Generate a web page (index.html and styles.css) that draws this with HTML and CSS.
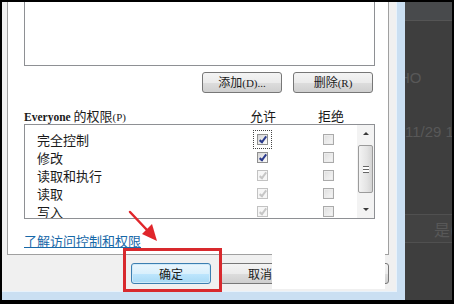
FILE: index.html
```html
<!DOCTYPE html>
<html lang="zh-CN">
<head>
    <meta charset="UTF-8">
    <meta name="viewport" content="width=device-width, initial-scale=1.0">
    <title>Everyone 的权限</title>
    <link rel="stylesheet" href="styles.css">
</head>
<body>
    <div class="screen">
        <div class="dialog">
            <div class="panel">
                <div class="group-list"></div>

                <div class="actions">
                    <button class="btn">添加<span class="lat">(D)...</span></button>
                    <button class="btn">删除<span class="lat">(R)</span></button>
                </div>

                <div class="perm-head">
                    <span class="perm-name"><span class="lat big">Everyone</span> 的权限<span class="lat">(P)</span></span>
                    <span class="perm-col">允许</span>
                    <span class="perm-col deny">拒绝</span>
                </div>

                <div class="perm-list">
                    <div class="perm-rows">
                        <div class="perm-row">
                            <span class="perm-name">完全控制</span>
                            <span class="perm-col"><span class="cb on focus"></span></span>
                            <span class="perm-col deny"><span class="cb off"></span></span>
                        </div>
                        <div class="perm-row">
                            <span class="perm-name">修改</span>
                            <span class="perm-col"><span class="cb on"></span></span>
                            <span class="perm-col deny"><span class="cb off"></span></span>
                        </div>
                        <div class="perm-row">
                            <span class="perm-name">读取和执行</span>
                            <span class="perm-col"><span class="cb on dim"></span></span>
                            <span class="perm-col deny"><span class="cb off"></span></span>
                        </div>
                        <div class="perm-row">
                            <span class="perm-name">读取</span>
                            <span class="perm-col"><span class="cb on dim"></span></span>
                            <span class="perm-col deny"><span class="cb off"></span></span>
                        </div>
                        <div class="perm-row">
                            <span class="perm-name">写入</span>
                            <span class="perm-col"><span class="cb on dim"></span></span>
                            <span class="perm-col deny"><span class="cb off"></span></span>
                        </div>
                    </div>
                    <div class="scrollbar">
                        <div class="sb-btn"><span class="arrow up"></span></div>
                        <div class="sb-track">
                            <div class="sb-thumb"><span class="grip"></span></div>
                        </div>
                        <div class="sb-btn"><span class="arrow down"></span></div>
                    </div>
                </div>

                <a class="help-link" href="#">了解访问控制和权限</a>
            </div>

            <div class="footer">
                <button class="btn default">确定</button>
                <button class="btn">取消</button>
                <button class="btn">应用<span class="lat">(A)</span></button>
            </div>
        </div>

        <div class="backdrop">
            <div class="bd-top"></div>
            <div class="bd-text bd-ho">HO</div>
            <div class="bd-text bd-date">11/29 1</div>
            <div class="bd-band"><span class="bd-text">是(</span></div>
        </div>

        <!-- annotations -->
        <div class="mark"></div>
        <div class="redact"></div>
        <svg class="arrow-note" width="40" height="40" viewBox="0 0 40 40">
            <path d="M2 2 L19 20" stroke="#e0262b" stroke-width="2.5" stroke-linecap="round"/>
            <polygon points="14,24 24,14 29,31" fill="#e0262b"/>
        </svg>
    </div>
</body>
</html>
```

FILE: styles.css
```css
body {
    margin: 0;
    background-color: #000;
    font-family: "Noto Sans CJK SC", "Liberation Sans", sans-serif;
    font-size: 13px;
    color: #1a1a1a;
}
.screen {
    position: relative;
    display: flex;
    width: 454px;
    height: 304px;
    box-sizing: border-box;
    padding: 2px 2px 4px 2px;
    overflow: hidden;
}
.dialog {
    display: flex;
    flex-direction: column;
    width: 403px;
    flex: 0 0 403px;
    box-sizing: border-box;
    background-color: #f0f0f0;
    border-right: 8px solid #cadff2;
    border-bottom: 8px solid #cadff2;
    box-shadow: inset -1px -1px 0 #e8f2fb;
}
.panel {
    display: flex;
    flex-direction: column;
    margin-left: 5px;
    width: 382px;
    height: 253px;
    box-sizing: border-box;
    padding-left: 16px;
    background-color: #fff;
    border: 1px solid #a0a0a0;
    border-top: none;
}
.group-list {
    width: 351px;
    height: 64px;
    box-sizing: border-box;
    border: 1px solid #8e9094;
    border-top: none;
}
.actions {
    display: flex;
    justify-content: flex-end;
    gap: 11px;
    width: 351px;
    padding-right: 2px;
    box-sizing: border-box;
    margin-top: 6px;
}
.btn {
    width: 80px;
    height: 21px;
    padding: 0;
    border: 1px solid #777;
    border-radius: 3px;
    background: linear-gradient(#f4f4f4 0%, #ebebeb 50%, #dddddd 51%, #cfcfcf 100%);
    font-family: "Noto Sans CJK SC", sans-serif;
    font-size: 12px;
    line-height: 18px;
    color: #1a1a1a;
    white-space: nowrap;
}
.btn.default {
    border-color: #3c7fb1;
    background: linear-gradient(#eaf6fd 0%, #d9f0fc 50%, #bee6fd 51%, #a7d9f5 100%);
    box-shadow: inset 0 0 0 1px #cfeaf9;
}
.lat {
    font-family: "Liberation Serif", serif;
    font-size: 11px;
}
.lat.big {
    font-size: 11.5px;
    font-weight: bold;
}
.perm-head {
    display: flex;
    align-items: center;
    height: 17px;
    margin-top: 14px;
    white-space: nowrap;
}
.perm-name {
    flex: 0 0 226px;
    white-space: nowrap;
}
.perm-col {
    display: flex;
    justify-content: center;
    flex: 0 0 24px;
    white-space: nowrap;
}
.perm-col.deny {
    margin-left: 42px;
}
.perm-list {
    display: flex;
    width: 351px;
    height: 95px;
    box-sizing: border-box;
    border: 1px solid #8e9094;
    overflow: hidden;
}
.perm-rows {
    flex: 1;
    padding-top: 5px;
}
.perm-row {
    display: flex;
    align-items: center;
    height: 18px;
}
.perm-row .perm-name {
    flex-basis: 213px;
    padding-left: 12px;
}
.cb {
    position: relative;
    width: 11px;
    height: 11px;
    box-sizing: border-box;
    border: 1px solid #8f8f8f;
    background: linear-gradient(135deg, #d6d6d6, #fdfdfd);
}
.cb.on::after {
    content: "";
    position: absolute;
    left: 3px;
    top: 0;
    width: 2px;
    height: 6px;
    border: solid #2b3b8c;
    border-width: 0 2px 2px 0;
    transform: rotate(38deg);
}
.cb.dim {
    border-color: #c2c2c2;
    background: #f6f6f6;
}
.cb.dim::after {
    border-color: #c6c6c6;
}
.cb.off {
    border-color: #aaa;
    background: linear-gradient(135deg, #dedede, #f7f7f7);
    box-shadow: inset 0 0 0 1px #ececec;
}
.cb.focus {
    outline: 1px dotted #444;
    outline-offset: 3px;
}
.scrollbar {
    display: flex;
    flex-direction: column;
    flex: 0 0 17px;
    background-color: #f3f3f3;
}
.sb-btn {
    display: flex;
    align-items: center;
    justify-content: center;
    height: 17px;
}
.arrow {
    width: 0;
    height: 0;
    border-left: 3px solid transparent;
    border-right: 3px solid transparent;
}
.arrow.up {
    border-bottom: 3px solid #3a3a3a;
}
.arrow.down {
    border-top: 3px solid #3a3a3a;
}
.sb-track {
    flex: 1;
    padding: 3px 1px 0 1px;
}
.sb-thumb {
    display: flex;
    align-items: center;
    justify-content: center;
    height: 48px;
    box-sizing: border-box;
    border: 1px solid #9b9b9b;
    border-radius: 2px;
    background: linear-gradient(90deg, #f3f3f3, #e4e4e4 60%, #d4d4d4);
}
.grip {
    width: 6px;
    height: 5px;
    border-top: 1px solid #666;
    border-bottom: 1px solid #666;
    background: linear-gradient(#fff 0 2px, #666 2px 3px, #fff 3px);
}
.help-link {
    align-self: flex-start;
    margin-top: 13px;
    line-height: 17px;
    color: #1768a8;
    text-decoration: underline;
}
.footer {
    display: flex;
    gap: 9px;
    padding-left: 129px;
    margin-top: 8px;
}
.backdrop {
    flex: 1;
    min-width: 0;
    background-color: #3e3e3e;
    overflow: hidden;
}
.bd-top {
    height: 18px;
    background-color: #484a4c;
    border-bottom: 1px solid #555;
}
.bd-text {
    font-family: "Liberation Sans", sans-serif;
    font-size: 15px;
    line-height: 18px;
    color: #585858;
    white-space: nowrap;
}
.bd-ho {
    margin-top: 48px;
    margin-left: -6px;
}
.bd-date {
    margin-top: 36px;
}
.bd-band {
    display: flex;
    align-items: center;
    height: 27px;
    margin-top: 73px;
    padding-left: 29px;
    background-color: #424242;
    border-top: 1px solid #505050;
    border-bottom: 1px solid #505050;
}
.bd-band .bd-text {
    font-family: "Noto Sans CJK SC", sans-serif;
    font-size: 16px;
}
.mark {
    position: absolute;
    left: 123px;
    top: 248px;
    width: 99px;
    height: 44px;
    box-sizing: border-box;
    border: 3px solid #d8292d;
}
.redact {
    position: absolute;
    left: 272px;
    top: 246px;
    width: 113px;
    height: 43px;
    background-color: #fff;
}
.arrow-note {
    position: absolute;
    left: 128px;
    top: 210px;
}
```
